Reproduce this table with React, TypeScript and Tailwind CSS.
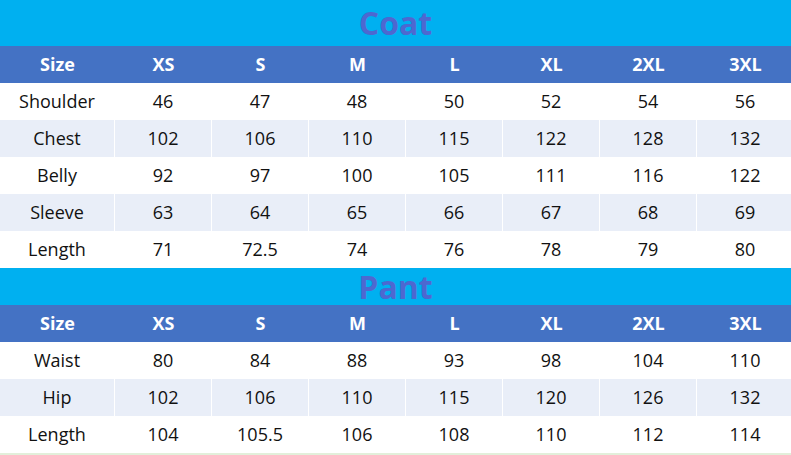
const sizes = ["XS", "S", "M", "L", "XL", "2XL", "3XL"];

const coat: [string, string[]][] = [
  ["Shoulder", ["46", "47", "48", "50", "52", "54", "56"]],
  ["Chest", ["102", "106", "110", "115", "122", "128", "132"]],
  ["Belly", ["92", "97", "100", "105", "111", "116", "122"]],
  ["Sleeve", ["63", "64", "65", "66", "67", "68", "69"]],
  ["Length", ["71", "72.5", "74", "76", "78", "79", "80"]],
];

const pant: [string, string[]][] = [
  ["Waist", ["80", "84", "88", "93", "98", "104", "110"]],
  ["Hip", ["102", "106", "110", "115", "120", "126", "132"]],
  ["Length", ["104", "105.5", "106", "108", "110", "112", "114"]],
];

function Section({ title, rows, titleH }: { title: string; rows: [string, string[]][]; titleH: string }) {
  return (
    <section>
      <div className={`flex items-center justify-center bg-[#00b0f0] ${titleH}`}>
        <h2 className="text-[32px] font-bold leading-none text-[#4d68d0]">{title}</h2>
      </div>
      <div className="grid h-[37px] grid-cols-[115px_repeat(7,97px)] bg-[#4472c4] text-[18px] font-bold text-white">
        <div className="flex items-center justify-center">Size</div>
        {sizes.map((s) => (
          <div key={s} className="flex items-center justify-center">
            {s}
          </div>
        ))}
      </div>
      {rows.map(([name, vals], i) => (
        <div
          key={name}
          className="grid h-[37px] grid-cols-[114px_repeat(7,96px)] gap-px bg-white text-[18px] text-[#111]"
        >
          {[name, ...vals].map((v, j) => (
            <div
              key={j}
              className={`flex items-center justify-center ${i % 2 === 1 ? "bg-[#e9eef8]" : "bg-white"}`}
            >
              {v}
            </div>
          ))}
        </div>
      ))}
    </section>
  );
}

export default function App() {
  return (
    <div className="h-[455px] w-[791px] overflow-hidden bg-white font-['Open_Sans','Noto_Sans',sans-serif]">
      <Section title="Coat" rows={coat} titleH="h-[46px]" />
      <Section title="Pant" rows={pant} titleH="h-[37px]" />
      <div className="h-[2px] bg-[#e2efda]" />
    </div>
  );
}
